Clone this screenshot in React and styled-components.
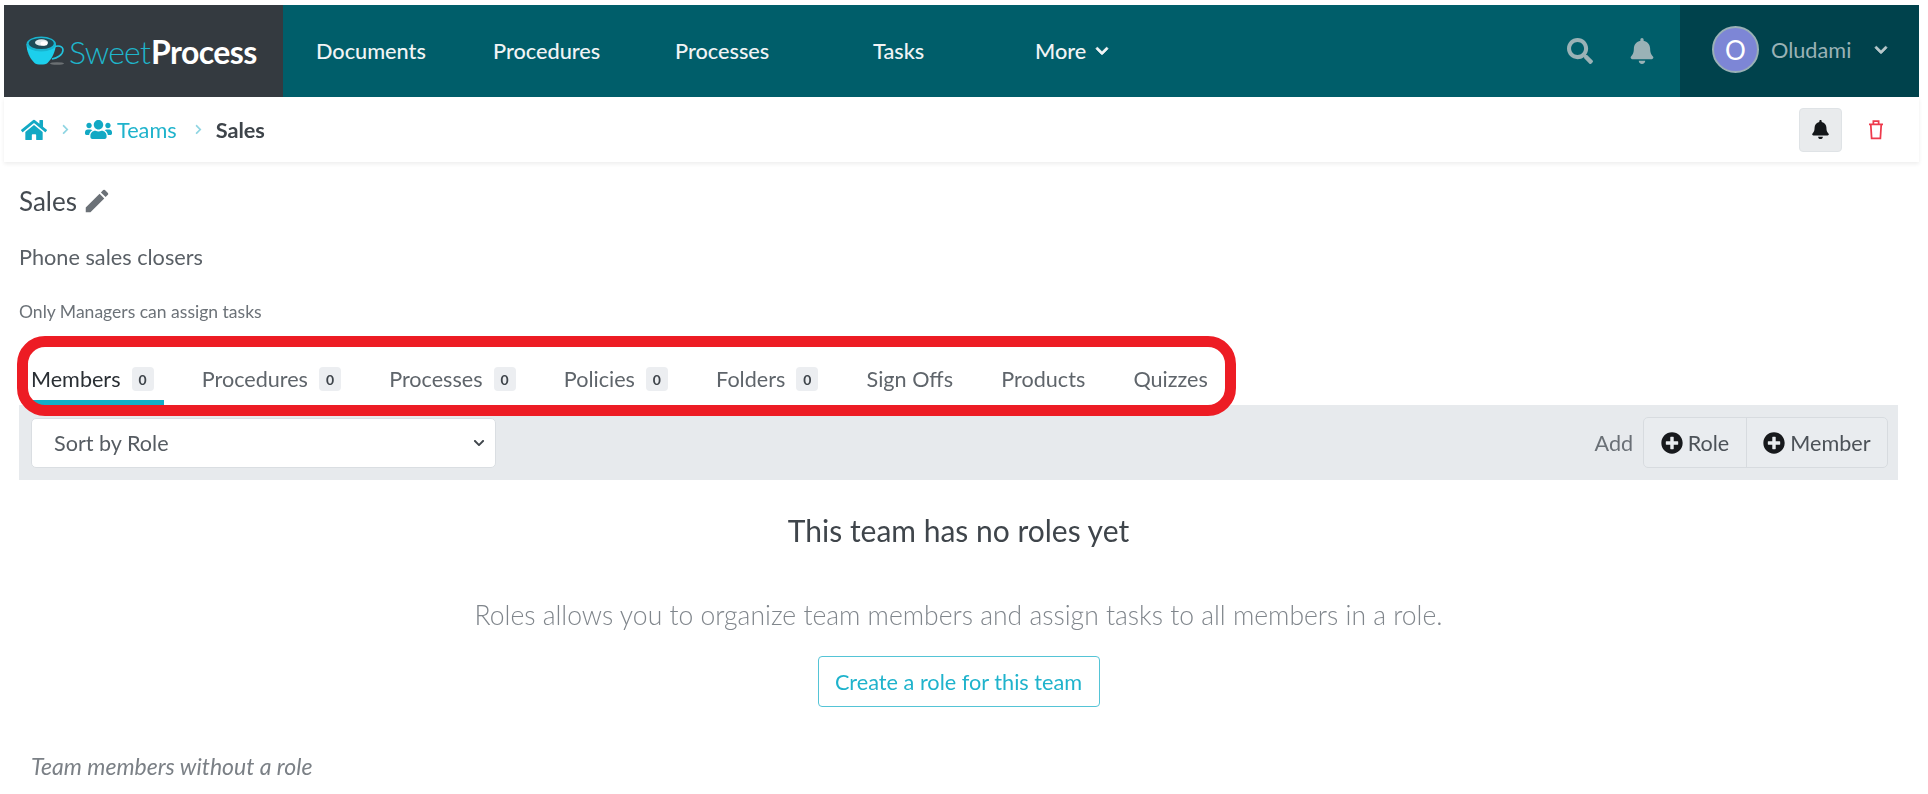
import React from "react";
import styled, { createGlobalStyle } from "styled-components";
import { FaHome, FaUsers, FaSearch, FaBell, FaChevronDown, FaPlusCircle, FaChevronRight } from "react-icons/fa";
import { MdEdit } from "react-icons/md";

const Global = createGlobalStyle`
  html, body { margin: 0; padding: 0; background: #fff; }
  body { font-family: "Lato", "Open Sans", sans-serif; color: #3e444a; }
  * { box-sizing: border-box; }
`;

const Page = styled.div`
  position: relative;
  width: 1928px;
  height: 794px;
  padding: 5px 9px 0 4px;
  overflow: hidden;
  filter: blur(0.45px);
`;

const Header = styled.header`
  display: flex;
  height: 92px;
  background: #005e6a;
`;

const Brand = styled.div`
  display: flex;
  align-items: center;
  width: 279px;
  padding-left: 22px;
  background: #343a40;
  gap: 3px;
`;

const BrandName = styled.span`
  font-size: 32px;
  letter-spacing: -0.8px;
  color: #1fb5cb;
  font-weight: 300;
  b { color: #fff; font-weight: 700; letter-spacing: -0.6px; margin-left: 1px; }
`;

const Nav = styled.nav`
  display: flex;
  align-items: center;
  flex: 1;
`;

const NavItem = styled.a`
  display: flex;
  align-items: center;
  gap: 9px;
  width: ${(p) => p.$w}px;
  padding-left: ${(p) => p.$pad || 0}px;
  color: #f1f4f5;
  font-size: 21.7px;
  font-weight: 500;
  svg { stroke: currentColor; stroke-width: 30; }
`;

const HeaderIcons = styled.div`
  display: flex;
  align-items: center;
  gap: 36px;
  padding-right: 25px;
  color: #9ab2b6;
  font-size: 26px;
`;

const UserPanel = styled.div`
  display: flex;
  align-items: center;
  width: 239px;
  padding-left: 32px;
  padding-bottom: 3px;
  background: #00424c;
`;

const Avatar = styled.div`
  display: flex;
  align-items: center;
  justify-content: center;
  width: 47px;
  height: 47px;
  border-radius: 50%;
  border: 2px solid #9ab0b6;
  background: #7d86d6;
  color: #fff;
  font-size: 26px;
`;

const UserName = styled.span`
  margin-left: 12px;
  color: #9ab2b6;
  font-size: 21.7px;
  width: 103px;
`;

const UserCaret = styled.span`
  display: flex;
  color: #b7c8cb;
  font-size: 14px;
  svg { stroke: currentColor; stroke-width: 30; }
`;

const Crumbs = styled.div`
  display: flex;
  align-items: center;
  height: 65px;
  padding: 0 34px 0 17px;
  background: #fff;
  box-shadow: 0 2px 4px rgba(0, 0, 0, 0.07);
  font-size: 21.7px;
`;

const CrumbLink = styled.a`
  display: flex;
  align-items: center;
  gap: 5px;
  color: #1fb3cc;
  svg { color: #12a9c4; }
`;

const CrumbSep = styled.span`
  display: flex;
  margin: 0 ${(p) => p.$r}px 0 ${(p) => p.$l}px;
  color: #8fd5e2;
  font-size: 11px;
`;

const CrumbCurrent = styled.span`
  font-weight: 700;
  color: #3e444a;
`;

const Spacer = styled.div`
  flex: 1;
`;

const BellButton = styled.button`
  display: flex;
  align-items: center;
  justify-content: center;
  width: 43px;
  height: 44px;
  border: 1px solid #dfe3e6;
  border-radius: 4px;
  background: #e9ebed;
  color: #14171a;
  font-size: 19px;
  margin-right: 25px;
`;

const Body = styled.main`
  padding: 0 21px 0 15px;
`;

const TitleRow = styled.h1`
  display: flex;
  align-items: center;
  gap: 5px;
  margin: 21px 0 0;
  font-size: 26px;
  line-height: 36px;
  font-weight: 400;
  color: #454b51;
  svg { font-size: 30px; color: #6b7177; }
`;

const Description = styled.p`
  margin: 22px 0 0;
  font-size: 21.7px;
  line-height: 32px;
  color: #5a6066;
`;

const Note = styled.p`
  margin: 27px 0 0;
  font-size: 17.55px;
  line-height: 24px;
  color: #6c7278;
`;

const Tabs = styled.div`
  display: flex;
  height: 72px;
  margin-top: 9px;
  padding-left: 12px;
  gap: 38.2px;
  align-items: stretch;
`;

const Tab = styled.a`
  display: flex;
  align-items: center;
  gap: 11px;
  height: 72px;
  padding: 36px 10px 11px 0;
  font-size: 21.6px;
  color: ${(p) => (p.$active ? "#2a2f34" : "#5f656b")};
  border-bottom: 5px solid ${(p) => (p.$active ? "#12aec8" : "transparent")};
`;

const Count = styled.span`
  display: inline-flex;
  align-items: center;
  justify-content: center;
  width: 22px;
  height: 24px;
  border-radius: 4px;
  background: #eceef1;
  color: #3f454b;
  font-size: 14px;
  font-weight: 700;
`;

const Toolbar = styled.div`
  display: flex;
  align-items: center;
  height: 75px;
  padding: 0 10px 0 12px;
  background: #e7eaed;
`;

const SortSelect = styled.div`
  display: flex;
  align-items: center;
  justify-content: space-between;
  width: 465px;
  height: 50px;
  padding: 0 8px 0 22px;
  background: #fff;
  border: 1px solid #dadee2;
  border-radius: 5px;
  font-size: 21.6px;
  color: #565c62;
  svg { font-size: 12px; color: #40464c; margin-right: 2px; }
`;

const AddLabel = styled.span`
  font-size: 21.6px;
  color: #6a7076;
  margin-right: 10px;
`;

const ButtonGroup = styled.div`
  display: flex;
  height: 51px;
  border: 1px solid #d7dbdf;
  border-radius: 5px;
  background: #e9ecef;
`;

const AddButton = styled.button`
  display: flex;
  align-items: center;
  gap: 5px;
  padding: 0 16.5px;
  border: 0;
  border-left: ${(p) => (p.$divider ? "1px solid #d7dbdf" : "0")};
  background: transparent;
  font-family: inherit;
  font-size: 21.6px;
  color: #4c5258;
  svg { color: #17191c; font-size: 22px; }
`;

const EmptyState = styled.section`
  display: flex;
  flex-direction: column;
  align-items: center;
`;

const EmptyTitle = styled.h2`
  margin: 30px 0 0;
  font-size: 30px;
  line-height: 40px;
  font-weight: 400;
  color: #3f454b;
`;

const EmptyText = styled.p`
  margin: 47px 0 0;
  font-size: 26.5px;
  line-height: 36px;
  font-weight: 300;
  color: #80868c;
`;

const CreateButton = styled.button`
  width: 282px;
  height: 51px;
  margin-top: 23px;
  border: 1px solid #55c4d6;
  border-radius: 4px;
  background: #fff;
  font-family: inherit;
  font-size: 21.7px;
  color: #1fb3cc;
`;

const Unassigned = styled.p`
  margin: 44px 0 0 12px;
  font-size: 23px;
  line-height: 30px;
  font-style: italic;
  font-weight: 400;
  color: #7b8086;
`;

const Highlight = styled.div`
  position: absolute;
  left: 17px;
  top: 336px;
  width: 1219px;
  height: 80px;
  border: 11px solid #ed1c24;
  border-radius: 28px;
  pointer-events: none;
`;

const CupLogo = () => (
  <svg width="40" height="30" viewBox="0 0 40 30" aria-hidden="true">
    <ellipse cx="31" cy="27.500" rx="7" ry="1.300" fill="#6b7073" />
    <path d="M28 11c4-2 9-1 9 3 0 5-6 8-11 9" fill="none" stroke="#22c3de" strokeWidth="1.600" />
    <path d="M0.500 8c0 7 3 14 8 19 2 2 11 2 13 0 5-5 8-12 8.500-19z" fill="#1ccfec" />
    <ellipse cx="15.250" cy="8" rx="14.750" ry="7.500" fill="#19b4cf" />
    <ellipse cx="15.250" cy="7.500" rx="12.500" ry="5.500" fill="#1d4a56" />
    <ellipse cx="15.500" cy="6.500" rx="6.500" ry="3.300" fill="#dfe9eb" />
    <ellipse cx="18" cy="7.500" rx="3.500" ry="2.200" fill="#fff" />
  </svg>
);

const TrashIcon = () => (
  <svg width="18" height="21" viewBox="0 0 20 24" fill="none" stroke="#ee3a4c" strokeWidth="2" aria-hidden="true">
    <path d="M2 6h16M7 6V2.500h6V6M4 6l1 16h10l1-16" />
  </svg>
);

const tabs = [
  { label: "Members", count: 0, active: true },
  { label: "Procedures", count: 0 },
  { label: "Processes", count: 0 },
  { label: "Policies", count: 0 },
  { label: "Folders", count: 0 },
  { label: "Sign Offs" },
  { label: "Products" },
  { label: "Quizzes" },
];

export default function App() {
  return (
    <Page>
      <Global />
      <Header>
        <Brand>
          <CupLogo />
          <BrandName>Sweet<b>Process</b></BrandName>
        </Brand>
        <Nav>
          <NavItem $w={210} $pad={33}>Documents</NavItem>
          <NavItem $w={182}>Procedures</NavItem>
          <NavItem $w={198}>Processes</NavItem>
          <NavItem $w={162}>Tasks</NavItem>
          <NavItem $w={120}>More <FaChevronDown size={14} /></NavItem>
        </Nav>
        <HeaderIcons>
          <FaSearch />
          <FaBell />
        </HeaderIcons>
        <UserPanel>
          <Avatar>O</Avatar>
          <UserName>Oludami</UserName>
          <UserCaret><FaChevronDown /></UserCaret>
        </UserPanel>
      </Header>

      <Crumbs>
        <CrumbLink><FaHome size={26} /></CrumbLink>
        <CrumbSep $l={13} $r={14}><FaChevronRight /></CrumbSep>
        <CrumbLink><FaUsers size={27} />Teams</CrumbLink>
        <CrumbSep $l={16} $r={12}><FaChevronRight /></CrumbSep>
        <CrumbCurrent>Sales</CrumbCurrent>
        <Spacer />
        <BellButton><FaBell /></BellButton>
        <TrashIcon />
      </Crumbs>

      <Body>
        <TitleRow>Sales <MdEdit /></TitleRow>
        <Description>Phone sales closers</Description>
        <Note>Only Managers can assign tasks</Note>
        <Tabs>
          {tabs.map((t) => (
            <Tab key={t.label} $active={t.active}>
              {t.label}
              {t.count !== undefined && <Count>{t.count}</Count>}
            </Tab>
          ))}
        </Tabs>
        <Toolbar>
          <SortSelect>
            Sort by Role
            <FaChevronDown />
          </SortSelect>
          <Spacer />
          <AddLabel>Add</AddLabel>
          <ButtonGroup>
            <AddButton><FaPlusCircle />Role</AddButton>
            <AddButton $divider><FaPlusCircle />Member</AddButton>
          </ButtonGroup>
        </Toolbar>
        <EmptyState>
          <EmptyTitle>This team has no roles yet</EmptyTitle>
          <EmptyText>Roles allows you to organize team members and assign tasks to all members in a role.</EmptyText>
          <CreateButton>Create a role for this team</CreateButton>
        </EmptyState>
        <Unassigned>Team members without a role</Unassigned>
      </Body>
      <Highlight />
    </Page>
  );
}
